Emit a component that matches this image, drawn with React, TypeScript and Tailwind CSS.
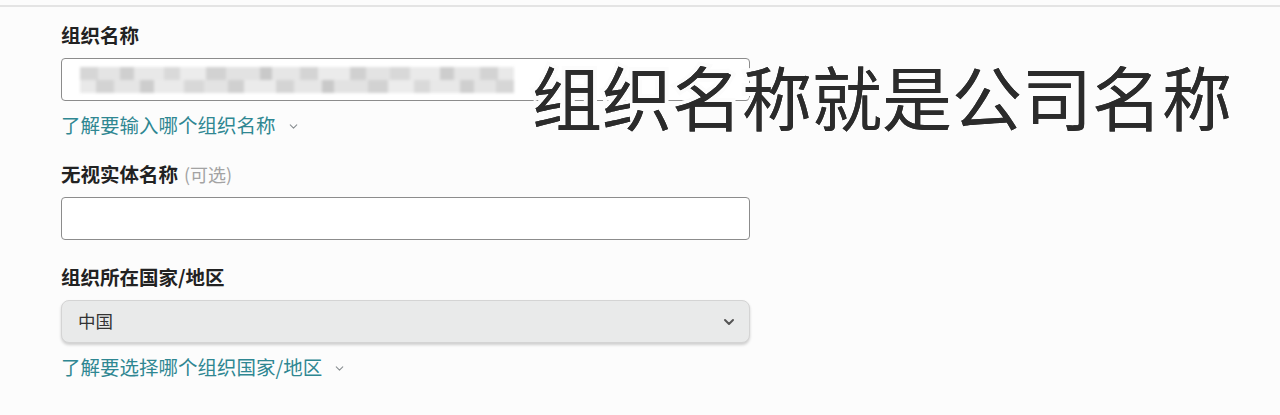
import { ChevronDown } from 'lucide-react';

const FONT = "font-['Microsoft_YaHei','Noto_Sans_CJK_SC',sans-serif]";

// pixelated blur of the hidden company name
const blurBlocks = [
  { w: 18, c: 'bg-[#d6d6d6]' },
  { w: 22, c: 'bg-[#e4e4e4]' },
  { w: 14, c: 'bg-[#cfcfcf]' },
  { w: 30, c: 'bg-[#e8e8e8]' },
  { w: 16, c: 'bg-[#d9d9d9]' },
  { w: 26, c: 'bg-[#ececec]' },
  { w: 20, c: 'bg-[#d2d2d2]' },
  { w: 34, c: 'bg-[#e2e2e2]' },
  { w: 12, c: 'bg-[#c9c9c9]' },
  { w: 28, c: 'bg-[#e6e6e6]' },
  { w: 18, c: 'bg-[#d4d4d4]' },
  { w: 32, c: 'bg-[#ebebeb]' },
  { w: 16, c: 'bg-[#d0d0d0]' },
  { w: 24, c: 'bg-[#e3e3e3]' },
  { w: 20, c: 'bg-[#d8d8d8]' },
  { w: 30, c: 'bg-[#eaeaea]' },
  { w: 14, c: 'bg-[#cdcdcd]' },
  { w: 26, c: 'bg-[#e5e5e5]' },
  { w: 18, c: 'bg-[#d3d3d3]' },
  { w: 16, c: 'bg-[#e9e9e9]' },
];

function HelpLink({ text }: { text: string }) {
  return (
    <div className="flex items-center gap-[11px] h-[24px] text-[19.5px] leading-[24px] text-[#2f8792]">
      <span>{text}</span>
      <ChevronDown size={13} strokeWidth={2} className="text-[#8a8f92] mt-[2px]" />
    </div>
  );
}

function Label({ children }: { children: React.ReactNode }) {
  return (
    <div className="h-[24px] text-[19.5px] leading-[24px] font-semibold text-[#222]">{children}</div>
  );
}

export default function App() {
  return (
    <div className={`relative w-[1280px] h-[415px] overflow-hidden bg-[#fcfcfc] ${FONT}`}>
      <div className="mt-[5px] h-[2px] bg-[#e4e4e4]" />

      <div className="pl-[61px] w-[750px] flex flex-col">
        <div className="mt-[16px]">
          <Label>组织名称</Label>
        </div>
        <div className="mt-[11px] h-[43px] rounded-[4px] border-[1.5px] border-[#8c8c8c] bg-white flex items-center px-[18px] overflow-hidden">
          <div className="flex flex-col gap-0 blur-[1.5px]">
            <div className="flex">
              {blurBlocks.map((b, i) => (
                <div key={i} className={`h-[13px] ${b.c}`} style={{ width: b.w }} />
              ))}
            </div>
            <div className="flex">
              {blurBlocks.slice().reverse().map((b, i) => (
                <div key={i} className={`h-[13px] ${b.c}`} style={{ width: b.w }} />
              ))}
            </div>
          </div>
        </div>
        <div className="mt-[12px]">
          <HelpLink text="了解要输入哪个组织名称" />
        </div>

        <div className="mt-[25px] flex items-center">
          <Label>无视实体名称</Label>
          <span className="ml-[6px] text-[18px] leading-[24px] text-[#a3a3a3]">(可选)</span>
        </div>
        <div className="mt-[11px] h-[43px] rounded-[4px] border-[1.5px] border-[#8c8c8c] bg-white" />

        <div className="mt-[25px]">
          <Label>组织所在国家/地区</Label>
        </div>
        <div className="mt-[11px] h-[43px] rounded-[8px] border border-[#d4d4d4] bg-[#e9eaea] shadow-[0_2px_3px_rgba(0,0,0,0.18)] flex items-center justify-between pl-[16px] pr-[12px]">
          <span className="text-[17.5px] text-[#333]">中国</span>
          <ChevronDown size={16} strokeWidth={3} className="text-[#555]" />
        </div>
        <div className="mt-[12px]">
          <HelpLink text="了解要选择哪个组织国家/地区" />
        </div>
      </div>

      {/* caption drawn over the form */}
      <div className="absolute left-[532px] top-[54px] text-[70px] leading-[84px] text-[#2b2b2b] whitespace-nowrap [paint-order:stroke_fill] [-webkit-text-stroke:8px_#fcfcfc] font-['Noto_Sans_CJK_SC',sans-serif]">
        组织名称就是公司名称
      </div>
      <div className="absolute left-[532px] top-[54px] text-[70px] leading-[84px] text-[#2b2b2b] whitespace-nowrap font-['Noto_Sans_CJK_SC',sans-serif]">
        组织名称就是公司名称
      </div>
    </div>
  );
}
